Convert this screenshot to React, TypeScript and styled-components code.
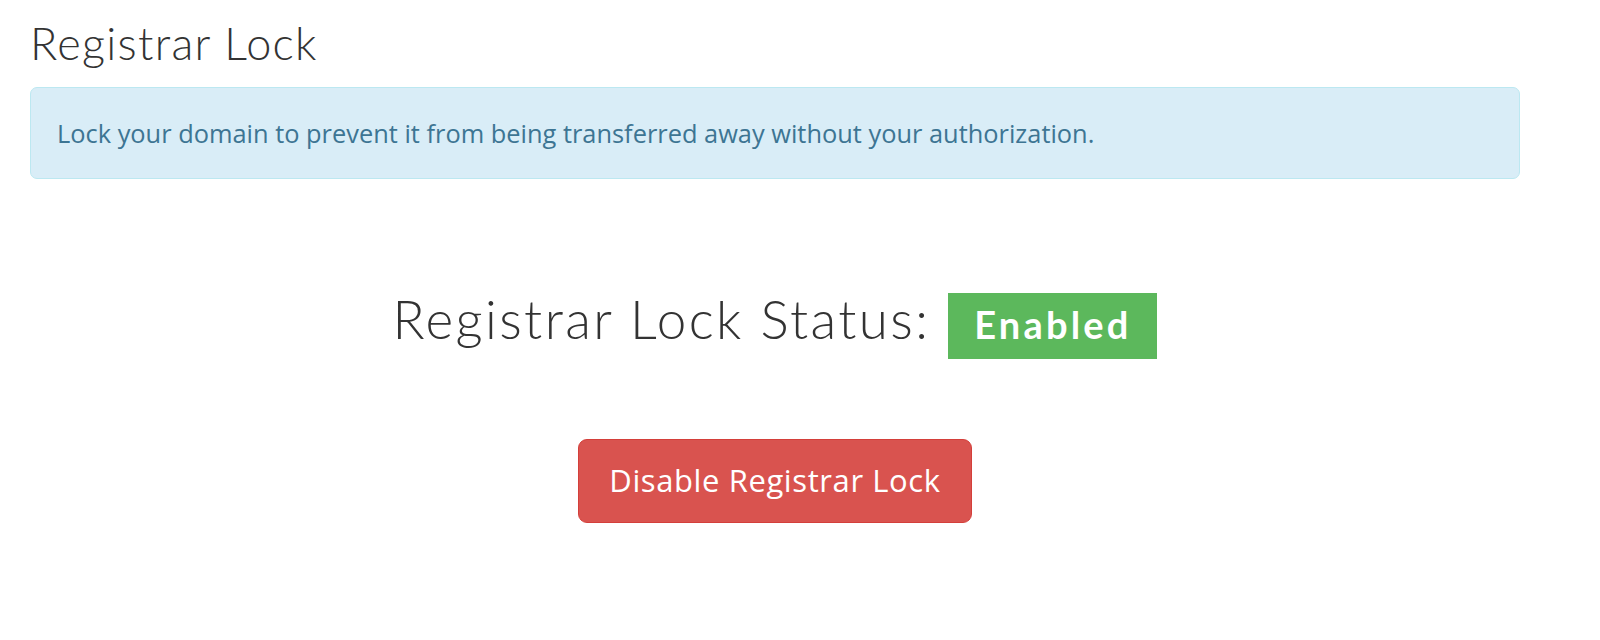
import React from 'react';
import styled, { createGlobalStyle } from 'styled-components';

const GlobalStyle = createGlobalStyle`
  body {
    margin: 0;
    background: #ffffff;
    font-family: 'Open Sans', 'Liberation Sans', sans-serif;
    color: #333333;
  }
`;

const Page = styled.div`
  width: 1490px;
  padding: 19px 0 0 30px;
`;

const Title = styled.h3`
  margin: 0 0 20px;
  font-family: Lato, 'Liberation Sans', sans-serif;
  font-weight: 300;
  font-size: 45px;
  line-height: 48px;
  letter-spacing: 1.3px;
  color: #333333;
`;

const Alert = styled.div`
  padding: 27px 26px;
  border: 1px solid #bce8f1;
  border-radius: 7px;
  background: #d9edf7;
  color: #3d7593;
  font-size: 25.4px;
  line-height: 1.42857;
`;

const StatusRow = styled.div`
  display: flex;
  justify-content: center;
  align-items: baseline;
  gap: 18px;
  margin-top: 111px;
`;

const StatusText = styled.h2`
  margin: 0;
  font-family: Lato, 'Liberation Sans', sans-serif;
  font-weight: 300;
  font-size: 53px;
  line-height: 1.1;
  letter-spacing: 2.4px;
  color: #333333;
`;

const Label = styled.span<{ $tone: 'success' | 'danger' }>`
  display: inline-block;
  width: 209px;
  padding: 12px 0 16px;
  text-align: center;
  font-family: Lato, 'Liberation Sans', sans-serif;
  font-weight: 700;
  font-size: 38px;
  line-height: 1;
  letter-spacing: 3.2px;
  color: #ffffff;
  background: ${(p) => (p.$tone === 'success' ? '#5cb85c' : '#d9534f')};
`;

const Actions = styled.div`
  display: flex;
  justify-content: center;
  margin-top: 80px;
`;

const Button = styled.button`
  padding: 20px 30px;
  border: 1px solid #d43f3a;
  border-radius: 9px;
  background: #d9534f;
  color: #ffffff;
  font-family: 'Open Sans', 'Liberation Sans', sans-serif;
  font-size: 31px;
  line-height: 1.3333;
  letter-spacing: 0.6px;
  cursor: pointer;
`;

export default function App() {
  return (
    <>
      <GlobalStyle />
      <Page>
        <Title>Registrar Lock</Title>
        <Alert>Lock your domain to prevent it from being transferred away without your authorization.</Alert>
        <StatusRow>
          <StatusText>Registrar Lock Status:</StatusText>
          <Label $tone="success">Enabled</Label>
        </StatusRow>
        <Actions>
          <Button>Disable Registrar Lock</Button>
        </Actions>
      </Page>
    </>
  );
}
